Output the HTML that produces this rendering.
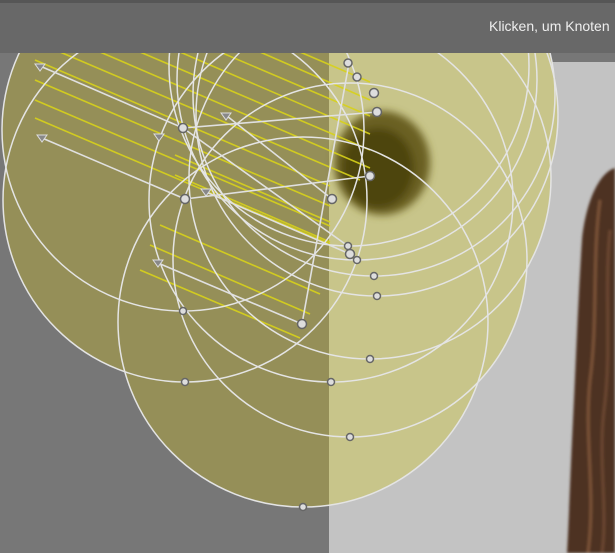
<!DOCTYPE html>
<html><head><meta charset="utf-8"><style>
html,body{margin:0;padding:0;width:615px;height:553px;overflow:hidden;background:#777}
svg{position:absolute;left:0;top:0}
.t{position:absolute;left:489px;top:18px;font:14px "Liberation Sans",sans-serif;color:#eee;white-space:nowrap}
</style></head><body>
<svg width="615" height="553" viewBox="0 0 615 553">
<defs>
<g id="cs">
<circle cx="303" cy="322" r="185"/>
<circle cx="185" cy="200" r="182"/>
<circle cx="183" cy="130" r="181"/>
<circle cx="331" cy="200" r="182"/>
<circle cx="350" cy="260" r="177"/>
<circle cx="370" cy="178" r="181"/>
<circle cx="377" cy="115" r="181"/>
<circle cx="374" cy="95" r="181"/>
<circle cx="357" cy="80" r="180"/>
<circle cx="349" cy="66" r="180"/>
</g>
<clipPath id="L"><rect x="0" y="0" width="329" height="553"/></clipPath>
<clipPath id="R"><rect x="329" y="0" width="286" height="553"/></clipPath>
<filter id="b"><feGaussianBlur stdDeviation="4"/></filter>
<filter id="b2"><feGaussianBlur stdDeviation="1.2"/></filter>
</defs>
<rect x="0" y="0" width="615" height="553" fill="#777"/>
<rect x="329" y="62" width="286" height="491" fill="#c3c3c3"/>
<g filter="url(#b2)">
<path d="M615 168 C600 172 586 200 582 240 C578 300 576 360 573 420 C570 480 569 520 567 553 L615 553Z" fill="#4e3122"/>
<path d="M600 200 C592 260 598 320 590 380 C584 440 596 490 588 553" stroke="#7a5238" stroke-width="3" fill="none"/>
<path d="M610 230 C604 290 612 350 604 410 C598 460 608 510 602 553" stroke="#6b4630" stroke-width="3" fill="none"/>
</g>
<g clip-path="url(#R)" fill="#c8c58a"><use href="#cs"/></g>
<g clip-path="url(#L)" fill="#958f58"><use href="#cs"/></g>
<g filter="url(#b)">
<ellipse cx="382" cy="163" rx="48" ry="52" fill="#6a6020"/>
<ellipse cx="378" cy="168" rx="36" ry="40" fill="#4e4510"/>
</g>
<g stroke="#d8d21a" stroke-width="1.6" opacity="0.9">
<line x1="35" y1="60" x2="330" y2="186"/>
<line x1="35" y1="80" x2="330" y2="206"/>
<line x1="35" y1="100" x2="330" y2="226"/>
<line x1="35" y1="118" x2="330" y2="244"/>
<line x1="60" y1="52" x2="360" y2="180"/>
<line x1="100" y1="52" x2="370" y2="168"/>
<line x1="140" y1="52" x2="370" y2="150"/>
<line x1="180" y1="52" x2="370" y2="134"/>
<line x1="220" y1="52" x2="370" y2="116"/>
<line x1="260" y1="52" x2="370" y2="100"/>
<line x1="300" y1="52" x2="370" y2="82"/>
<line x1="175" y1="155" x2="330" y2="222"/>
<line x1="175" y1="175" x2="330" y2="242"/>
<line x1="160" y1="225" x2="320" y2="294"/>
<line x1="150" y1="245" x2="310" y2="314"/>
<line x1="140" y1="270" x2="300" y2="338"/>
</g>
<g fill="none" stroke="#e4e4e4" stroke-width="1.5"><use href="#cs"/></g>
<g stroke="#e0e0e0" stroke-width="1.6">
<line x1="40" y1="66" x2="183" y2="128"/>
<line x1="42" y1="138" x2="185" y2="199"/>
<line x1="183" y1="128" x2="377" y2="112"/>
<line x1="185" y1="199" x2="370" y2="176"/>
<line x1="227" y1="116" x2="332" y2="199"/>
<line x1="206" y1="192" x2="350" y2="254"/>
<line x1="158" y1="263" x2="302" y2="324"/>
<line x1="302" y1="324" x2="349" y2="63"/>
<line x1="183" y1="128" x2="348" y2="246"/>
</g>
<g fill="#888" stroke="#ddd" stroke-width="1">
<path d="M35 64 L45 64 L40 71Z"/><path d="M37 135 L47 135 L42 142Z"/>
<path d="M221 113 L231 113 L226 120Z"/><path d="M201 189 L211 189 L206 196Z"/>
<path d="M153 260 L163 260 L158 267Z"/><path d="M154 134 L164 134 L159 141Z"/>
</g>
<g fill="#ddd" stroke="#666" stroke-width="1.5">
<circle cx="348" cy="63" r="4"/><circle cx="357" cy="77" r="4"/><circle cx="374" cy="93" r="4.5"/>
<circle cx="377" cy="112" r="4.5"/><circle cx="183" cy="128" r="4.5"/><circle cx="185" cy="199" r="4.5"/>
<circle cx="332" cy="199" r="4.5"/><circle cx="370" cy="176" r="4.5"/><circle cx="302" cy="324" r="4.5"/>
<circle cx="348" cy="246" r="3.5"/><circle cx="350" cy="254" r="4.5"/><circle cx="357" cy="260" r="3.5"/>
<circle cx="374" cy="276" r="3.5"/><circle cx="377" cy="296" r="3.5"/><circle cx="370" cy="359" r="3.5"/>
<circle cx="331" cy="382" r="3.5"/><circle cx="185" cy="382" r="3.5"/><circle cx="183" cy="311" r="3.5"/>
<circle cx="350" cy="437" r="3.5"/><circle cx="303" cy="507" r="3.5"/>
</g>
<rect x="0" y="0" width="615" height="53" fill="#686868"/>
<rect x="0" y="0" width="615" height="3" fill="#565656"/>
</svg>
<div class="t">Klicken, um Knoten</div>
</body></html>
